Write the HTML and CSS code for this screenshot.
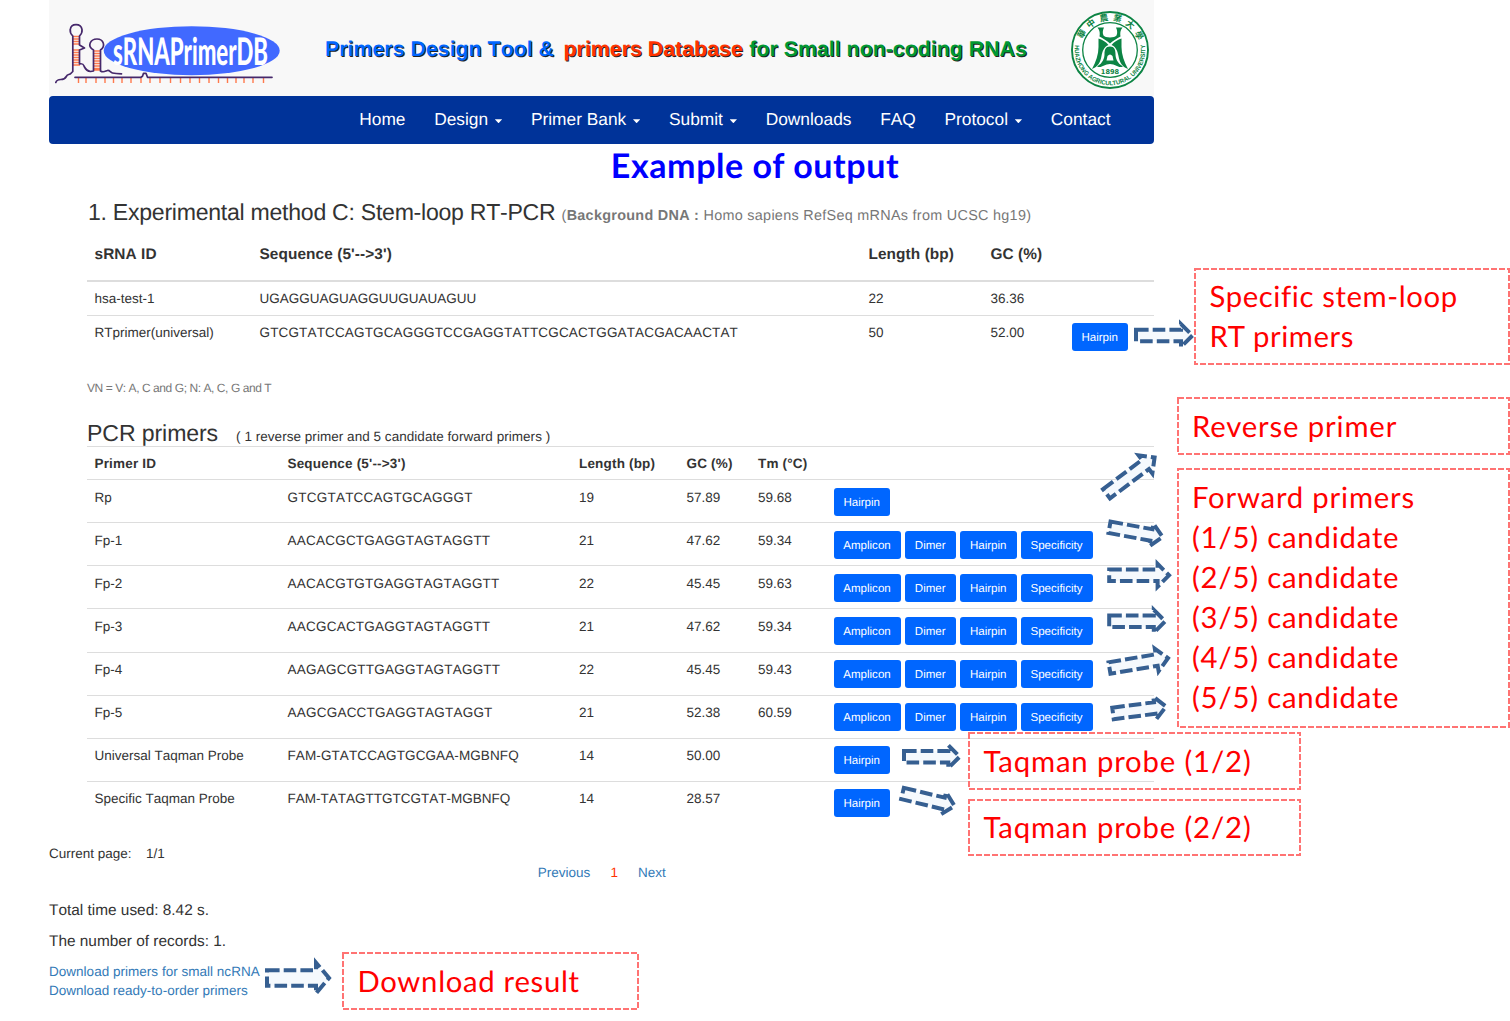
FILE: index.html
```html
<!DOCTYPE html>
<html lang="en">
<head>
<meta charset="utf-8">
<title>sRNAPrimerDB - Example of output</title>
<link rel="stylesheet" href="styles.css">
</head>
<body>
<div class="slide">
  <div class="page">
    <header class="banner">
      <svg class="logo" width="230" height="66" viewBox="0 0 230 66" aria-label="sRNAPrimerDB">
        <ellipse cx="136.700" cy="31.700" rx="88" ry="24.500" fill="#4169ff"/>
        <text class="logo-text" x="58" y="46" textLength="155" lengthAdjust="spacingAndGlyphs">sRNAPrimerDB</text>
        <g stroke="#ff7a4d" stroke-width="1.400">
          <path d="M18 17.500h7M18 20h7M18 22.500h7M18 25h7M18 31h7M18 33.500h7M18 36h7M18 38.500h7M18 41h7M18 43.500h7M18 46h7M39 32h7M39 34.500h7M39 37h7M39 39.500h7M39 42h7M39 44.500h7M39 47h7M39 49.500h7M39 51h7"/>
          <path d="M23.500 59v5M31 59v5M41 59v5M50 59v5M58.500 59v5M67 59v5M76 59v5M86 59v5M95 59v5M105 59v5M115.500 59v5M125.500 59v5M135 59v5M144.500 59v5M154 59v5M163.500 59v5M172.500 59v5M181 59v5M189 59v5M198 59v5M208.500 59v5"/>
        </g>
        <g fill="none" stroke="#46286b" stroke-width="1.700" stroke-linejoin="round" stroke-linecap="round">
          <path d="M.8 63.500c1-3 3-3 5-3s4 0 5.500-3 3-1 5-3.500l1.500-1.500V17c-2-2-3-4-2.500-6.500C16 4 26 4 27 10.500c.4 2.500-.5 4.500-2.500 6.500v9l5 3-5 2v14c4-1 4 1 5 3s2 4 6 4.500l3-.5V31c-7-4-3-11 3.500-11S51 27 45.500 31v21c3 2 5 0 7-.5s3 2 5 2.500 3 .7 9 .8"/>
          <path d="M20 58.300h66l1.500-1 1-3h2.500l1.500 4H217"/>
        </g>
      </svg>
      <h1 class="site-title"><span class="t-blue">Primers Design Tool &amp;</span><span class="t-red">primers Database</span><span class="t-green">for Small non-coding RNAs</span></h1>
      <svg class="seal" width="80" height="80" viewBox="-40 -40 80 80" aria-label="Huazhong Agricultural University">
        <defs>
          <path id="arc-top" d="M-29.500 0A29.500 29.500 0 0 1 29.500 0"/>
          <path id="arc-bottom" d="M-34.800 -6A35.300 35.300 0 1 0 34.800 -6"/>
        </defs>
        <circle r="38" fill="#fff" stroke="#0c8444" stroke-width="1.900"/>
        <circle r="27.300" fill="none" stroke="#0c8444" stroke-width="1.300"/>
        <text class="seal-cjk"><textPath href="#arc-top" startOffset="11" textLength="72">華中農業大學</textPath></text>
        <text class="seal-latin"><textPath href="#arc-bottom" startOffset="1" textLength="121" lengthAdjust="spacingAndGlyphs">HUAZHONG AGRICULTURAL UNIVERSITY</textPath></text>
        <g fill="#0c8444">
          <path d="M-12.500-22.500H-6c-1.500 3-1.500 6-.5 8 1.500 2.500 11.500 2.500 13 0 1-2 1-5-.5-8h6.500c-2.500 3-2.500 6-2 9C7-11.500 3-9.500 0-6.500-3-9.500-7-11.500-10.500-13.500c.5-3 .5-6-2-9z"/>
          <path d="M-11.500-11.500C-8-10.500-4-8-1.500-5-6-3-7.500 1-8.500 6c-1 6-3.500 11-9.500 13 4-7 6.500-15 6.500-22z"/>
          <path d="M11.500-11.500C8-10.500 4-8 1.500-5 6-3 7.500 1 8.500 6c1 6 3.500 11 9.500 13-4-7-6.500-15-6.500-22z"/>
          <path fill-rule="evenodd" d="M0-3.500c4.500 0 5.500 3.500 5.500 7.500s1.500 9 7.500 12.500C8 18.500 6 14 0 14s-8 4.500-13 2.500C-7 13-5.500 8-5.500 4s1-7.500 5.500-7.500zM-2.500 6-3.500 10.500h7L2.500 6Q0 3-2.500 6z"/>
        </g>
        <text class="seal-year" x="0" y="24.300" text-anchor="middle">1898</text>
      </svg>
    </header>
    <nav class="nav">
      <a>Home</a><a class="drop">Design</a><a class="drop">Primer Bank</a><a class="drop">Submit</a><a>Downloads</a><a>FAQ</a><a class="drop">Protocol</a><a>Contact</a>
    </nav>
  </div>

  <h2 class="example"><span>Example of output</span></h2>

  <main class="results">
    <h3 class="method">1. Experimental method C: Stem-loop RT-PCR <small><b>Background DNA :</b> Homo sapiens RefSeq mRNAs from UCSC hg19)</small></h3>
    <div class="targets">
      <div class="row head"><b>sRNA ID</b><b>Sequence (5'--&gt;3')</b><b>Length (bp)</b><b>GC (%)</b></div>
      <div class="row"><span>hsa-test-1</span><span>UGAGGUAGUAGGUUGUAUAGUU</span><span>22</span><span>36.36</span></div>
      <div class="row last"><span>RTprimer(universal)</span><span class="seq-long">GTCGTATCCAGTGCAGGGTCCGAGGTATTCGCACTGGATACGACAACTAT</span><span>50</span><span>52.00</span><div class="actions"><a class="btn w-hair">Hairpin</a></div></div>
    </div>
    <p class="note">VN = V: A, C and G; N: A, C, G and T</p>

    <h3 class="pcr">PCR primers <small>( 1 reverse primer and 5 candidate forward primers )</small></h3>
    <div class="primers">
      <div class="row head"><b>Primer ID</b><b>Sequence (5'--&gt;3')</b><b>Length (bp)</b><b>GC (%)</b><b>Tm (°C)</b></div>
      <div class="row"><span>Rp</span><span class="seq">GTCGTATCCAGTGCAGGGT</span><span>19</span><span>57.89</span><span>59.68</span><div class="actions"><a class="btn w-hair">Hairpin</a></div></div>
      <div class="row"><span>Fp-1</span><span class="seq">AACACGCTGAGGTAGTAGGTT</span><span>21</span><span>47.62</span><span>59.34</span><div class="actions"><a class="btn w-amp">Amplicon</a><a class="btn w-dim">Dimer</a><a class="btn w-hair">Hairpin</a><a class="btn w-spec">Specificity</a></div></div>
      <div class="row"><span>Fp-2</span><span class="seq">AACACGTGTGAGGTAGTAGGTT</span><span>22</span><span>45.45</span><span>59.63</span><div class="actions"><a class="btn w-amp">Amplicon</a><a class="btn w-dim">Dimer</a><a class="btn w-hair">Hairpin</a><a class="btn w-spec">Specificity</a></div></div>
      <div class="row"><span>Fp-3</span><span class="seq">AACGCACTGAGGTAGTAGGTT</span><span>21</span><span>47.62</span><span>59.34</span><div class="actions"><a class="btn w-amp">Amplicon</a><a class="btn w-dim">Dimer</a><a class="btn w-hair">Hairpin</a><a class="btn w-spec">Specificity</a></div></div>
      <div class="row"><span>Fp-4</span><span class="seq">AAGAGCGTTGAGGTAGTAGGTT</span><span>22</span><span>45.45</span><span>59.43</span><div class="actions"><a class="btn w-amp">Amplicon</a><a class="btn w-dim">Dimer</a><a class="btn w-hair">Hairpin</a><a class="btn w-spec">Specificity</a></div></div>
      <div class="row"><span>Fp-5</span><span class="seq">AAGCGACCTGAGGTAGTAGGT</span><span>21</span><span>52.38</span><span>60.59</span><div class="actions"><a class="btn w-amp">Amplicon</a><a class="btn w-dim">Dimer</a><a class="btn w-hair">Hairpin</a><a class="btn w-spec">Specificity</a></div></div>
      <div class="row"><span>Universal Taqman Probe</span><span class="probe">FAM-GTATCCAGTGCGAA-MGBNFQ</span><span>14</span><span>50.00</span><span></span><div class="actions"><a class="btn w-hair">Hairpin</a></div></div>
      <div class="row"><span>Specific Taqman Probe</span><span>FAM-TATAGTTGTCGTAT-MGBNFQ</span><span>14</span><span>28.57</span><span></span><div class="actions"><a class="btn w-hair">Hairpin</a></div></div>
    </div>
  </main>

  <footer class="summary">
    <p class="current"><span>Current page:</span><span>1/1</span></p>
    <div class="pager"><a>Previous</a><span>1</span><a>Next</a></div>
    <p class="stat">Total time used: 8.42 s.</p>
    <p class="stat">The number of records: 1.</p>
    <div class="downloads"><a>Download primers for small ncRNA</a><a>Download ready-to-order primers</a></div>
  </footer>

  <svg class="overlay" width="1510" height="1021" viewBox="0 0 1510 1021" aria-hidden="true">
    <g class="frames">
      <rect x="1195" y="269" width="314" height="95"/>
      <rect x="1178" y="398" width="331" height="56"/>
      <rect x="1178" y="469" width="331" height="258"/>
      <rect x="969" y="733" width="331" height="56"/>
      <rect x="969" y="800" width="331" height="55"/>
      <rect x="343" y="953" width="295" height="56"/>
    </g>
    <g class="arrows">
      <path transform="translate(1136 335.500)" d="M0-5.800H45V-11.400L56.500 0 45 11.400V5.800H0Z"/>
      <path transform="translate(1106.500 493.800) rotate(-37)" d="M0-5.800H48.800V-11.400L60.200 0 48.800 11.400V5.800H0Z"/>
      <path transform="translate(1109.500 527.300) rotate(10.400)" d="M0-5.800H42.600V-11.400L54 0 42.600 11.400V5.800H0Z"/>
      <path transform="translate(1109.200 575.300)" d="M0-5.800H48.400V-11.400L59.800 0 48.400 11.400V5.800H0Z"/>
      <path transform="translate(1109.200 621.300)" d="M0-5.800H44.600V-11.400L56 0 44.600 11.400V5.800H0Z"/>
      <path transform="translate(1109.500 668) rotate(-9.600)" d="M0-5.800H47.900V-11.400L59.300 0 47.900 11.400V5.800H0Z"/>
      <path transform="translate(1113 713.500) rotate(-7.500)" d="M0-5.800H42.100V-11.400L53.500 0 42.100 11.400V5.800H0Z"/>
      <path transform="translate(904 756.700)" d="M0-5.800H44.300V-11.400L55.700 0 44.300 11.400V5.800H0Z"/>
      <path transform="translate(902.500 793.500) rotate(13.500)" d="M0-5.800H42.100V-11.400L53.500 0 42.100 11.400V5.800H0Z"/>
      <path transform="translate(267 978)" d="M0-7.700H49V-15.400L62 0 49 15.400V7.700H0Z"/>
    </g>
  </svg>
  <div class="callout c-stem">Specific stem-loop<br>RT primers</div>
  <div class="callout c-rev">Reverse primer</div>
  <div class="callout c-fwd">Forward primers<br>(1/5) candidate<br>(2/5) candidate<br>(3/5) candidate<br>(4/5) candidate<br>(5/5) candidate</div>
  <div class="callout c-taq1">Taqman probe (1/2)</div>
  <div class="callout c-taq2">Taqman probe (2/2)</div>
  <div class="callout c-down">Download result</div>
</div>
</body>
</html>
```
FILE: styles.css
```css
* { box-sizing: border-box; }
body { margin: 0; background: #fff; color: #333; font-family: "Liberation Sans", Arial, sans-serif; font-size: 13.500px; text-rendering: geometricPrecision; font-kerning: none; font-variant-ligatures: none; }
h1, h2, h3, p { margin: 0; font-weight: normal; }
.slide { position: relative; width: 1510px; height: 1021px; overflow: hidden; }
.page { width: 1105.500px; margin-left: 48.500px; }

.banner { height: 96px; background: #f8f8f8; display: flex; align-items: center; padding: 0 4px 0 6px; }
.logo { margin-top: 8px; flex: none; overflow: visible; }
.logo-text { font-family: Lato, sans-serif; font-weight: 900; font-size: 38px; fill: #fff; }
.site-title { flex: 1; display: flex; gap: 9.500px; padding: 2px 0 0 40.500px; font-size: 21.300px; letter-spacing: .03px; font-weight: bold; white-space: nowrap; text-shadow: 1px 1.300px 0 #222; }
.t-blue { color: #0066ff; }
.t-red { color: #ff3300; }
.t-green { color: #009933; margin-left: -3px; }
.seal { flex: none; margin-top: 3px; }
.seal-cjk { font: bold 8.500px "Noto Sans CJK TC", sans-serif; fill: #0c8444; }
.seal-latin { font: bold 6.300px "Liberation Sans", sans-serif; fill: #0c8444; }
.seal-year { font: bold 6.600px "DejaVu Sans", sans-serif; fill: #0c8444; }

.nav { height: 47.500px; background: #003399; border-radius: 4px; display: flex; align-items: center; justify-content: flex-end; gap: 28.700px; padding: 0 43.500px 1px 0; color: #fff; font-size: 17.330px; }
.drop { display: flex; align-items: center; }
.drop::after { content: ""; margin: 4px 0 0 6.700px; width: 7.400px; height: 4px; background: #fff; clip-path: polygon(0 0, 100% 0, 50% 100%); }

.example { height: 46px; padding-bottom: 3px; display: flex; align-items: center; justify-content: center; font: bold 34px/43px Lato, sans-serif; letter-spacing: .570px; color: #0000ff; }

.results { margin-left: 87px; width: 1066.500px; }
.method { height: 44px; padding: 8px 0 0 1px; font-size: 23.100px; line-height: 28px; letter-spacing: -.27px; white-space: nowrap; }
.method small { font-size: 14.400px; letter-spacing: .29px; color: #777; }
.method small::before { content: "("; }
.row { display: grid; align-items: start; white-space: nowrap; }
.row > * { line-height: 19px; }
.targets .row { grid-template-columns: 165px 609px 122px 81px 1fr; padding: 7px 0 0 7.500px; height: 34.500px; border-bottom: 1px solid #ddd; }
.targets .head { height: 48px; padding-top: 11px; font-size: 15.400px; letter-spacing: .08px; border-bottom-width: 2px; }
.targets .last { height: 52px; border: 0; }
.seq { letter-spacing: .23px; }
.seq-long { letter-spacing: .15px; }
.probe { letter-spacing: .1px; }
.note { font-size: 12px; line-height: 16px; padding-top: 12px; color: #777; letter-spacing: -.43px; }
.pcr { height: 49.500px; padding-top: 22.500px; font-size: 23.100px; line-height: 28px; letter-spacing: -.1px; display: flex; gap: 18px; }
.pcr small { font-size: 13.500px; line-height: 35px; letter-spacing: .04px; }
.primers .row { grid-template-columns: 193px 291.500px 107.500px 71.500px 75.500px 1fr; padding: 7.500px 0 0 7.500px; height: 43.130px; border-top: 1px solid #ddd; }
.primers .head { height: 33.500px; padding-top: 7px; letter-spacing: .18px; }
.actions { display: flex; gap: 4px; }
.btn { height: 28px; border-radius: 3px; background: #0066ff; color: #fff; font-size: 11.550px; line-height: 30px; text-align: center; }
.w-amp { width: 67px; }
.w-dim { width: 51.500px; }
.w-hair { width: 56.500px; }
.w-spec { width: 72px; }

.summary { margin-left: 49px; width: 1105.500px; padding-top: 20px; }
.current { display: flex; gap: 14.500px; line-height: 19px; }
.pager { display: flex; justify-content: center; gap: 20px; line-height: 19px; color: #337ab7; }
.pager span { color: #ff3300; }
.stat { font-size: 15.400px; line-height: 22px; margin-top: 9px; }
.pager + .stat { margin-top: 18px; }
.downloads { display: flex; flex-direction: column; line-height: 18.700px; margin-top: 10px; color: #337ab7; letter-spacing: .02px; }

.overlay { position: absolute; left: 0; top: 0; }
.frames rect { fill: none; stroke: #ff7373; stroke-width: 2; stroke-dasharray: 6 2; }
.arrows path { fill: #f5f9fd; stroke: #365f91; stroke-width: 4; stroke-dasharray: 12.600 4.100; stroke-miterlimit: 10; }
.callout { position: absolute; font: 29.300px/40px Lato, sans-serif; letter-spacing: .850px; color: #ff0000; white-space: nowrap; }
.c-stem { left: 1209.500px; top: 277px; letter-spacing: .600px; }
.c-rev { left: 1192px; top: 407px; }
.c-fwd { left: 1192px; top: 478px; letter-spacing: .800px; }
.c-taq1 { left: 983.500px; top: 742px; }
.c-taq2 { left: 983.500px; top: 808px; }
.c-down { left: 357.500px; top: 962px; letter-spacing: .700px; }
```
